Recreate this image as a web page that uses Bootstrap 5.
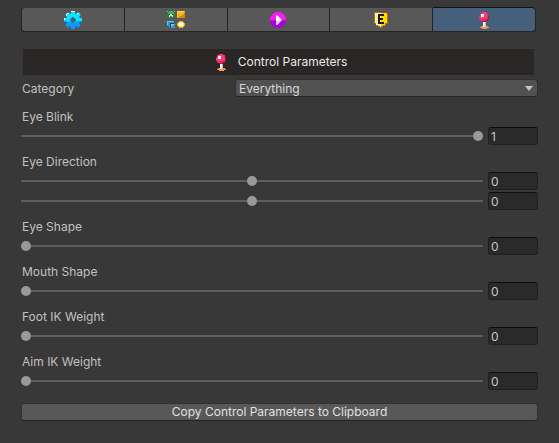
<!DOCTYPE html>
<html lang="en">
<head>
<meta charset="utf-8">
<meta name="viewport" content="width=device-width, initial-scale=1">
<title>Control Parameters</title>
<link href="https://cdn.jsdelivr.net/npm/bootstrap@5.3.0/dist/css/bootstrap.min.css" rel="stylesheet">
<style>
body { background: #383838; color: #c0c0c0; font: 12px/18px Inter, "Liberation Sans", sans-serif; }
.panel { padding: 8px 21px 22px; }
.tabs { margin-right: 2px; gap: 1px; background: #242424; border: 1px solid #242424; border-top-width: 0; border-radius: 3px; }
.tabs .btn { flex: 1 1 0; height: 23px; background: #585858; border: 0; border-radius: 0; }
.tabs .btn:first-child { border-radius: 3px 0 0 3px; }
.tabs .btn:last-child { border-radius: 0 3px 3px 0; }
.tabs .btn.active { background: #46607c; box-shadow: 0 -1px #101419; }
.banner { height: 26px; margin: 17px 4px 4px 2px; padding: 0 0 0 5px; gap: 11px; background: #2a2626; color: #e8e8e8; font-size: 12px; line-height: 18px; font-weight: 400; }
.name { height: 18px; padding: 1px 0 0 1px; }
.category { margin-bottom: 10px; }
.category label { flex: 0 0 214px; }
.category select { height: 18px; padding: 0 20px 0 3px; font-size: 12px; line-height: 15px; color: #d8d8d8; background-color: #515151; border: 1px solid #303030; border-bottom-color: #242424; border-radius: 3px; background-image: none; }
.category svg { position: absolute; right: 5px; top: 7px; pointer-events: none; }
.groups { gap: 7px; }
.group { gap: 2px; }
.slide { gap: 5px; }
.slide input[type=range] { height: 18px; min-width: 0; }
.slide input[type=range]::-webkit-slider-runnable-track { height: 2px; background: #5e5e5e; border-radius: 0; }
.slide input[type=range]::-webkit-slider-thumb { width: 10px; height: 10px; margin-top: -4px; background: #999; box-shadow: none; }
.slide input[type=text] { flex: 0 0 50px; width: 50px; min-height: 0; height: 18px; padding: 1px 2px 0; font-size: 12px; line-height: 15px; color: #c8c8c8; background: #2a2a2a; border: 1px solid #212121; border-top-color: #0d0d0d; border-radius: 3px; }
.copy { height: 18px; margin-top: 13px; padding: 0; font-size: 12px; line-height: 16px; color: #e0e0e0; background: #585858; border: 1px solid #303030; border-bottom-color: #242424; border-radius: 3px; }
</style>
</head>
<body>
<svg class="position-absolute" width="0" height="0" aria-hidden="true">
  <clipPath id="gear">
    <rect x="7" y="0" width="4" height="18"/>
    <rect x="0" y="7" width="18" height="4"/>
    <rect x="7" y="0" width="4" height="18" transform="rotate(45 9 9)"/>
    <rect x="7" y="0" width="4" height="18" transform="rotate(-45 9 9)"/>
    <circle cx="9" cy="9" r="7"/>
  </clipPath>
  <symbol id="joystick" viewBox="0 0 12 18" shape-rendering="crispEdges">
    <path fill="#e92d60" d="M4 1h4v1h2v2h1v4h-1v2H8v1H4v-1H2V8H1V4h1V2h2z"/>
    <path fill="#ff397a" d="M4 1h4v1h1v5H7v1H3V7H2V4h1V2h1z"/>
    <path fill="#b91645" d="M10 4h1v4h-1v2H8v1H4v-1h3V9h2V8h1z"/>
    <path fill="#fff" d="M3 3h3v3H3z"/>
    <path fill="#eee" d="M5 11h2v5H5z"/>
    <path fill="#bfc3cc" d="M7 11h1v4H7z"/>
    <path fill="#f29253" d="M3 15h2v1h2v-1h3v1h1v1H9v1H4v-1H2v-1h1z"/>
  </symbol>
</svg>
<main class="panel">
  <div class="tabs d-flex" role="group" aria-label="Sections">
    <button type="button" class="btn p-0 d-flex align-items-center justify-content-center" aria-label="Settings">
      <svg width="18" height="18" viewBox="0 0 18 18">
        <g clip-path="url(#gear)">
          <path fill="#08e4ff" d="M0 0h18v10H0z"/>
          <path fill="#079bff" d="M0 10h18v8H0z"/>
          <path fill="#10baff" d="M3 10h12v1H3z"/>
          <path fill="#e4fdff" d="M7 0h4v1H7zM2 2h3v1H3v2H2zM13 2h3v1h-3zM0 7h1v2H0z"/>
        </g>
        <path fill="#1c7fae" d="M8 6h2v1h1v1h1v2h-1v1h-1v1H8v-1H7v-1H6V8h1V7h1z"/>
        <path fill="#585858" d="M8 7h2v1h1v2h-1v1H8v-1H7V8h1z"/>
      </svg>
    </button>
    <button type="button" class="btn p-0 d-flex align-items-center justify-content-center" aria-label="Assets">
      <svg width="18" height="18" viewBox="0 0 18 18" shape-rendering="crispEdges">
        <path fill="#168452" d="M1 0h6v1h1v5H7v1H1V6H0V1h1z"/>
        <path fill="#25be67" d="M2 0h4v1h1v2H1V1h1z"/>
        <path fill="#f39b36" d="M0 0h1v1H0zm7 0h1v1H7z"/>
        <path fill="#ffd5ac" d="M2 3h4v3H2z"/>
        <path fill="#4a382d" d="M2 3h1v1H2zm3 0h1v1H5z"/>
        <path fill="#e94739" d="M3 5h2v1H3z"/>
        <path fill="#f7b918" d="M10 0h8v7h-8z"/>
        <path fill="#ffd44b" d="M10 0h7v1h-6v2h-1z"/>
        <path fill="#d98507" d="M17 1h1v6h-7V6h2V5h2V4h1V3h1z"/>
        <path fill="#239ad1" d="M0 10h7v3H4v4H2v-2H0z"/>
        <path fill="#56ceed" d="M0 10h6v1H1v3H0z"/>
        <path fill="#173f64" d="M3 12h4v1H4v4H3z"/>
        <path fill="#3895da" d="M4 13h4v4H4z"/>
        <path fill="#6dceff" d="M4 13h3v1H5v2H4z"/>
        <path fill="#e9a80e" d="M12 10h4v1h1v1h1v3h-1v1h-1v1h-4v-1h-1v-1h-1v-3h1v-1h1z"/>
        <path fill="#ffe47b" d="M12 11h4v1h1v3h-1v1h-4v-1h-1v-3h1z"/>
        <path fill="#fff" d="M12 12h4v3h-4z"/>
      </svg>
    </button>
    <button type="button" class="btn p-0 d-flex align-items-center justify-content-center" aria-label="Play">
      <svg width="18" height="18" viewBox="0 0 18 18">
        <circle cx="9" cy="9" r="8" fill="#a600de"/>
        <path fill="#fb1df0" d="M1 9a8 8 0 0 1 16 0z"/>
        <path fill="#c209db" d="M1 9h16v1H1z"/>
        <path fill="#fff" d="M7 4h1l5 5-5 5H7z"/>
        <path fill="#d6cce1" d="M7 10h5l-4 4H7z"/>
      </svg>
    </button>
    <button type="button" class="btn p-0 d-flex align-items-center justify-content-center" aria-label="Emblem">
      <svg width="16" height="16" viewBox="0 0 16 16" shape-rendering="crispEdges">
        <path fill="#b16b34" d="M1 0h14v12h-2v2h-3v1H9v1H7v-1H6v-1H3v-2H1z"/>
        <path fill="#fff3a5" d="M2 1h6v14H7v-1H5v-1H3v-2H2z"/>
        <path fill="#ffda00" d="M8 1h6v10h-2v2h-2v1H8z"/>
        <path fill="#c83620" d="M8 0h7v2h-1V1H8z"/>
        <path fill="#191714" d="M5 2h6v2H7v2h3v2H7v2h4v2H5z"/>
      </svg>
    </button>
    <button type="button" class="btn active p-0 d-flex align-items-center justify-content-center" aria-label="Control Parameters" aria-pressed="true">
      <svg width="12" height="18"><use href="#joystick"/></svg>
    </button>
  </div>

  <h1 class="banner d-flex align-items-center justify-content-center">
    <svg width="12" height="18" aria-hidden="true"><use href="#joystick"/></svg>
    <span>Control Parameters</span>
  </h1>

  <div class="category d-flex">
    <label for="category" class="name">Category</label>
    <div class="position-relative flex-grow-1">
      <select id="category" class="form-select"><option>Everything</option></select>
      <svg width="8" height="5" aria-hidden="true"><path fill="#c4c4c4" d="M0 0h8L4 5z"/></svg>
    </div>
  </div>

  <div class="groups d-flex flex-column">
    <div class="group d-flex flex-column">
      <label class="name" for="blink">Eye Blink</label>
      <div class="slide d-flex"><input type="range" class="form-range flex-fill" id="blink" min="0" max="1" step="0.01" value="1"><input type="text" class="form-control" value="1" aria-label="Eye Blink value"></div>
    </div>
    <div class="group d-flex flex-column">
      <label class="name" for="direction">Eye Direction</label>
      <div class="slide d-flex"><input type="range" class="form-range flex-fill" id="direction" min="-1" max="1" step="0.01" value="0"><input type="text" class="form-control" value="0" aria-label="Eye Direction horizontal value"></div>
      <div class="slide d-flex"><input type="range" class="form-range flex-fill" min="-1" max="1" step="0.01" value="0" aria-label="Eye Direction vertical"><input type="text" class="form-control" value="0" aria-label="Eye Direction vertical value"></div>
    </div>
    <div class="group d-flex flex-column">
      <label class="name" for="eyeshape">Eye Shape</label>
      <div class="slide d-flex"><input type="range" class="form-range flex-fill" id="eyeshape" min="0" max="1" step="0.01" value="0"><input type="text" class="form-control" value="0" aria-label="Eye Shape value"></div>
    </div>
    <div class="group d-flex flex-column">
      <label class="name" for="mouth">Mouth Shape</label>
      <div class="slide d-flex"><input type="range" class="form-range flex-fill" id="mouth" min="0" max="1" step="0.01" value="0"><input type="text" class="form-control" value="0" aria-label="Mouth Shape value"></div>
    </div>
    <div class="group d-flex flex-column">
      <label class="name" for="foot">Foot IK Weight</label>
      <div class="slide d-flex"><input type="range" class="form-range flex-fill" id="foot" min="0" max="1" step="0.01" value="0"><input type="text" class="form-control" value="0" aria-label="Foot IK Weight value"></div>
    </div>
    <div class="group d-flex flex-column">
      <label class="name" for="aim">Aim IK Weight</label>
      <div class="slide d-flex"><input type="range" class="form-range flex-fill" id="aim" min="0" max="1" step="0.01" value="0"><input type="text" class="form-control" value="0" aria-label="Aim IK Weight value"></div>
    </div>
  </div>

  <button type="button" class="copy btn w-100 d-block">Copy Control Parameters to Clipboard</button>
</main>
<script src="https://cdn.jsdelivr.net/npm/bootstrap@5.3.0/dist/js/bootstrap.bundle.min.js"></script>
</body>
</html>
